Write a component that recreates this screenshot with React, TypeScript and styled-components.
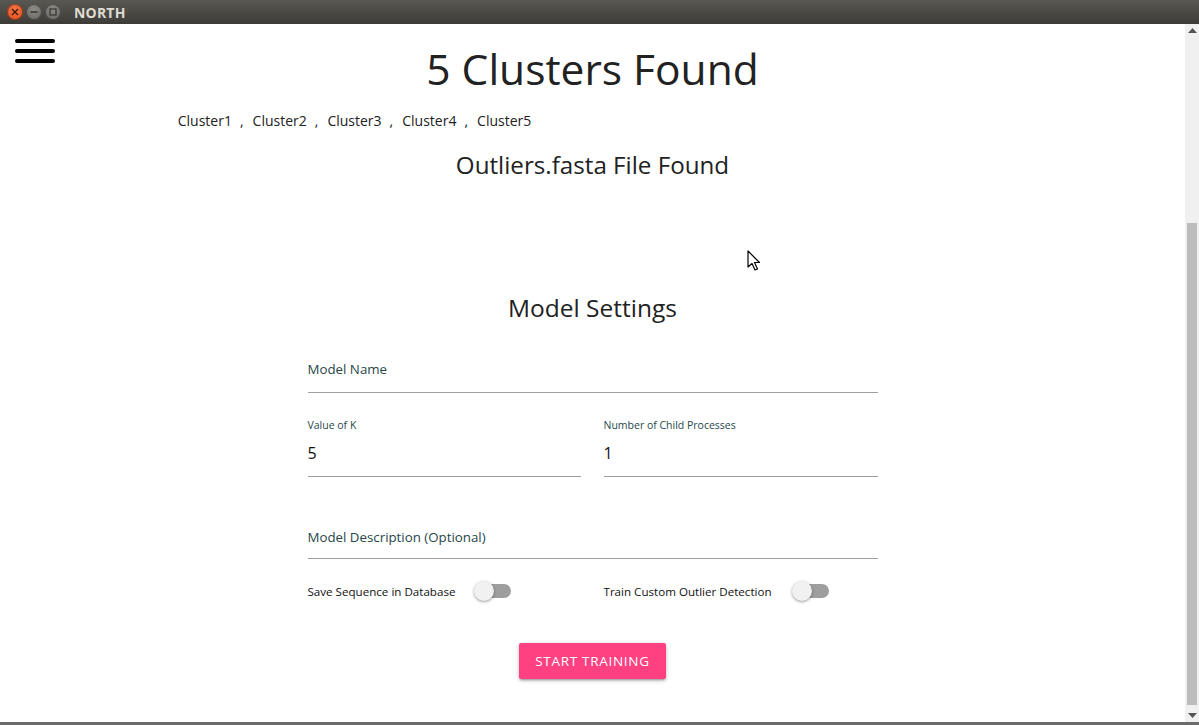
import React from "react";
import styled, { createGlobalStyle } from "styled-components";

const Global = createGlobalStyle`
  html, body { margin: 0; padding: 0; height: 100%; overflow: hidden; }
  body { font-family: "Open Sans", "Noto Sans", sans-serif; background: #fff; }
  #root { height: 100%; }
`;

const Window = styled.div`
  display: flex;
  flex-direction: column;
  height: 725px;
  width: 1199px;
`;

const TitleBar = styled.div`
  height: 24px;
  flex: none;
  display: flex;
  align-items: center;
  padding-left: 7px;
  gap: 3px;
  background: linear-gradient(#5a5852, #3c3b37);
`;

const WinButton = styled.div<{ $kind: "close" | "min" | "max" }>`
  width: 16px;
  height: 16px;
  border-radius: 50%;
  display: flex;
  align-items: center;
  justify-content: center;
  background: ${(p) =>
    p.$kind === "close"
      ? "radial-gradient(circle at 50% 35%, #f5764a, #df4b16)"
      : "radial-gradient(circle at 50% 35%, #8e8c86, #64625d)"};
  box-shadow: inset 0 0 0 1px rgba(0,0,0,0.35);
`;

const WinTitle = styled.div`
  margin-left: 10px;
  font-family: "Open Sans", sans-serif;
  font-weight: 700;
  font-size: 14px;
  color: #dfdbd2;
  letter-spacing: 0.2px;
`;

const Body = styled.div`
  flex: 1;
  display: flex;
  min-height: 0;
`;

const Content = styled.div`
  flex: 1;
  position: relative;
  display: flex;
  flex-direction: column;
  align-items: center;
`;

const Hamburger = styled.div`
  position: absolute;
  left: 15px;
  top: 15px;
  display: flex;
  flex-direction: column;
  gap: 6px;
`;

const HamLine = styled.span`
  display: block;
  width: 40px;
  height: 4px;
  border-radius: 2px;
  background: #000;
`;

const Title = styled.h1`
  margin: 16px 0 0;
  font-weight: 400;
  font-size: 42.5px;
  line-height: 58px;
  color: #222;
`;

const ClusterList = styled.div`
  width: 70%;
  margin-top: 13px;
  font-size: 14px;
  line-height: 20px;
  color: #222;
  display: flex;
`;

const Sep = styled.span`
  margin: 0 9px 0 8px;
`;

const SubTitle = styled.h2<{ $top: number; $size: number }>`
  margin: ${(p) => p.$top}px 0 0;
  font-weight: 400;
  font-size: ${(p) => p.$size}px;
  line-height: 32px;
  color: #222;
`;

const Form = styled.div`
  width: 570px;
  margin-top: 7px;
  display: flex;
  flex-direction: column;
`;

const Field = styled.div<{ $h: number }>`
  height: ${(p) => p.$h}px;
  border-bottom: 1px solid #9e9e9e;
  display: flex;
  flex-direction: column;
  justify-content: flex-end;
  box-sizing: border-box;
`;

const BigLabel = styled.div<{ $pad: number }>`
  font-size: 13.3px;
  color: #26474a;
  padding-bottom: ${(p) => p.$pad}px;
`;

const SmallLabel = styled.div`
  font-size: 10.5px;
  color: #26474a;
`;

const Value = styled.div`
  font-size: 16px;
  line-height: 20px;
  color: #111;
  padding: 11px 0 13px;
`;

const Row = styled.div<{ $top: number }>`
  display: grid;
  grid-template-columns: 273px 274px;
  column-gap: 23px;
  margin-top: ${(p) => p.$top}px;
`;

const SwitchCell = styled.div`
  display: flex;
  align-items: center;
  height: 22px;
`;

const SwitchLabel = styled.span<{ $w: number }>`
  font-size: 11.6px;
  color: #111;
  width: ${(p) => p.$w}px;
`;

const Switch = styled.span`
  position: relative;
  width: 37px;
  height: 20px;
  display: inline-block;
`;

const Track = styled.span`
  position: absolute;
  left: 6px;
  right: 0;
  top: 3px;
  height: 14px;
  border-radius: 7px;
  background: #9e9e9e;
`;

const Thumb = styled.span`
  position: absolute;
  left: 0;
  top: 0;
  width: 20px;
  height: 20px;
  border-radius: 50%;
  background: #f1f1f1;
  box-shadow: 0 1px 3px rgba(0,0,0,0.4);
`;

const Button = styled.button`
  align-self: center;
  margin-top: 41px;
  width: 147px;
  height: 36px;
  border: none;
  border-radius: 2px;
  background: #ff4081;
  color: #fff;
  font-family: "Open Sans", sans-serif;
  font-size: 13.5px;
  letter-spacing: 0.7px;
  box-shadow: 0 2px 2px rgba(0,0,0,0.14), 0 3px 1px -2px rgba(0,0,0,0.12), 0 1px 5px rgba(0,0,0,0.2);
`;

const ScrollBar = styled.div`
  width: 14px;
  flex: none;
  background: #f0f0f0;
  display: flex;
  flex-direction: column;
  align-items: center;
  justify-content: space-between;
  padding: 4px 0 4px;
  box-sizing: border-box;
`;

const ScrollTrackArea = styled.div`
  flex: 1;
  width: 100%;
  display: flex;
  flex-direction: column;
  justify-content: flex-end;
  align-items: center;
  padding: 190px 0 8px;
  box-sizing: border-box;
`;

const Thumbbar = styled.div`
  width: 10px;
  flex: 1;
  background: #bcbcbc;
`;

const BottomLine = styled.div`
  height: 3px;
  flex: none;
  background: #6a6a6a;
`;

const Cursor = styled.svg`
  position: absolute;
  left: 747px;
  top: 226px;
`;

const Arrow = ({ up }: { up?: boolean }) => (
  <svg width="9" height="5" viewBox="0 0 9 5">
    <path d={up ? "M0 5 L4.5 0 L9 5 Z" : "M0 0 L4.5 5 L9 0 Z"} fill="#555" />
  </svg>
);

const clusters = ["Cluster1", "Cluster2", "Cluster3", "Cluster4", "Cluster5"];

export default function App() {
  return (
    <>
      <Global />
      <Window>
        <TitleBar>
          <WinButton $kind="close">
            <svg width="8" height="8" viewBox="0 0 8 8">
              <path d="M1 1 L7 7 M7 1 L1 7" stroke="#3a1a0a" strokeWidth="1.4" />
            </svg>
          </WinButton>
          <WinButton $kind="min">
            <svg width="8" height="8" viewBox="0 0 8 8">
              <path d="M0.5 4 H7.5" stroke="#3a3935" strokeWidth="1.6" />
            </svg>
          </WinButton>
          <WinButton $kind="max">
            <svg width="8" height="8" viewBox="0 0 8 8">
              <rect x="1" y="1" width="6" height="6" fill="none" stroke="#3a3935" strokeWidth="1.3" />
            </svg>
          </WinButton>
          <WinTitle>NORTH</WinTitle>
        </TitleBar>
        <Body>
          <Content>
            <Hamburger>
              <HamLine />
              <HamLine />
              <HamLine />
            </Hamburger>
            <Title>5 Clusters Found</Title>
            <ClusterList>
              {clusters.map((c, i) => (
                <React.Fragment key={c}>
                  {i > 0 && <Sep>,</Sep>}
                  <span>{c}</span>
                </React.Fragment>
              ))}
            </ClusterList>
            <SubTitle $top={18} $size={24.2}>Outliers.fasta File Found</SubTitle>
            <SubTitle $top={111} $size={24.5}>Model Settings</SubTitle>
            <Form>
              <Field $h={62}>
                <BigLabel $pad={14}>Model Name</BigLabel>
              </Field>
              <Row $top={0}>
                <Field $h={84}>
                  <SmallLabel>Value of K</SmallLabel>
                  <Value>5</Value>
                </Field>
                <Field $h={84}>
                  <SmallLabel>Number of Child Processes</SmallLabel>
                  <Value>1</Value>
                </Field>
              </Row>
              <Field $h={82}>
                <BigLabel $pad={12}>Model Description (Optional)</BigLabel>
              </Field>
              <Row $top={21}>
                <SwitchCell>
                  <SwitchLabel $w={166}>Save Sequence in Database</SwitchLabel>
                  <Switch>
                    <Track />
                    <Thumb />
                  </Switch>
                </SwitchCell>
                <SwitchCell>
                  <SwitchLabel $w={188}>Train Custom Outlier Detection</SwitchLabel>
                  <Switch>
                    <Track />
                    <Thumb />
                  </Switch>
                </SwitchCell>
              </Row>
              <Button>START TRAINING</Button>
            </Form>
            <Cursor width="14" height="22" viewBox="0 0 14 22">
              <path d="M1 1 L1 17 L5 13.5 L8 20 L10.5 19 L7.5 12.5 L12.5 12.5 Z" fill="#fff" stroke="#000" strokeWidth="1.2" strokeLinejoin="round" />
            </Cursor>
          </Content>
          <ScrollBar>
            <Arrow up />
            <ScrollTrackArea>
              <Thumbbar />
            </ScrollTrackArea>
            <Arrow />
          </ScrollBar>
        </Body>
        <BottomLine />
      </Window>
    </>
  );
}
